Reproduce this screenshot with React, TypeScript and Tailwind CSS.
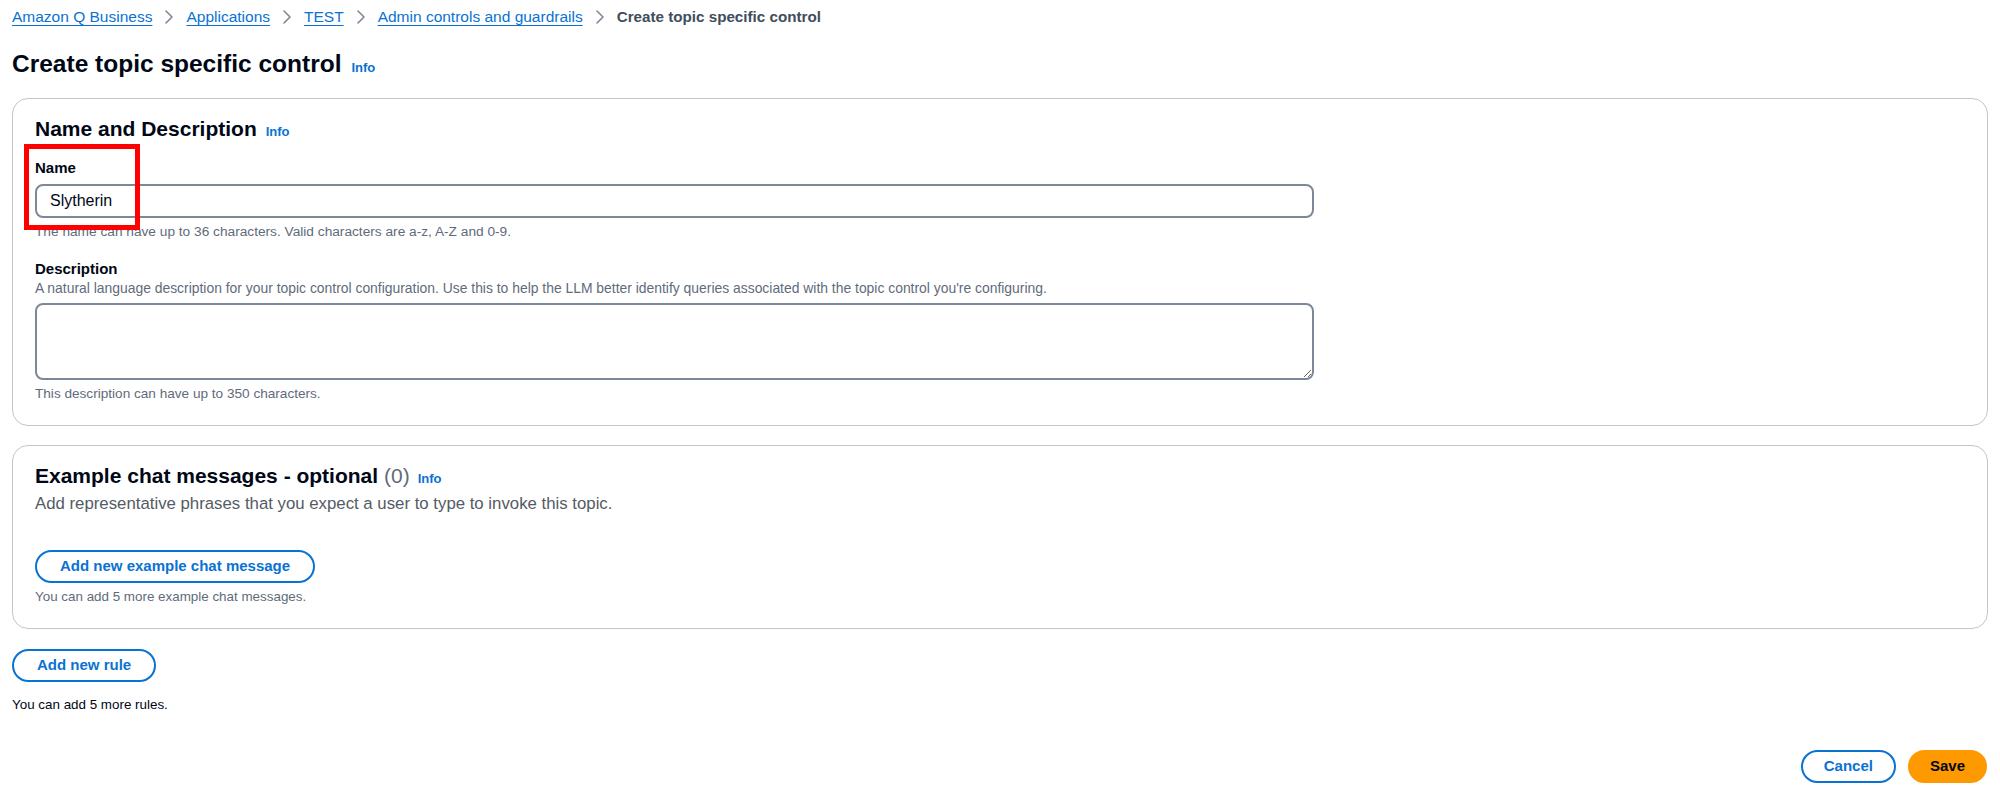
import React from "react";

type Crumb = { label: string; href?: string };

const crumbs: Crumb[] = [
  { label: "Amazon Q Business", href: "#" },
  { label: "Applications", href: "#" },
  { label: "TEST", href: "#" },
  { label: "Admin controls and guardrails", href: "#" },
  { label: "Create topic specific control" },
];

function Chevron() {
  return (
    <svg width="8" height="14" viewBox="0 0 8 14" className="mx-[13px] shrink-0" fill="none">
      <path d="M1 1l6 6-6 6" stroke="#7d8998" strokeWidth="1.6" strokeLinecap="round" strokeLinejoin="round" />
    </svg>
  );
}

function Info() {
  return <a href="#" className="text-[13px] font-bold text-[#0972d3]">Info</a>;
}

function OutlineButton({ children, className = "" }: { children: React.ReactNode; className?: string }) {
  return (
    <button
      type="button"
      className={`h-[33px] rounded-full border-2 border-[#0972d3] bg-white text-[15px] font-bold text-[#0972d3] ${className}`}
    >
      {children}
    </button>
  );
}

export default function App() {
  return (
    <div className="min-h-[799px] bg-white px-3 font-['Liberation_Sans',Arial,sans-serif] text-[#000716]">
      <nav className="flex items-center pt-[6px] text-[15.5px] leading-[22px]">
        {crumbs.map((c, i) => (
          <React.Fragment key={c.label}>
            {c.href ? (
              <a href={c.href} className="text-[#0972d3] underline decoration-1 underline-offset-[3px]">
                {c.label}
              </a>
            ) : (
              <span className="text-[15.2px] font-bold text-[#414d5c]">{c.label}</span>
            )}
            {i < crumbs.length - 1 && <Chevron />}
          </React.Fragment>
        ))}
      </nav>

      <div className="mt-[20px] flex items-baseline gap-[10px]">
        <h1 className="text-[24.5px] font-bold leading-[32px]">Create topic specific control</h1>
        <Info />
      </div>

      <section className="relative mt-[18px] rounded-[16px] border border-[#c0c6ce] px-[22px] pt-[16px] pb-[22px]">
        <div className="flex items-baseline gap-[9px]">
          <h2 className="text-[21px] font-bold leading-[28px]">Name and Description</h2>
          <Info />
        </div>

        <label className="mt-[15px] block text-[15px] font-bold leading-[20px]">Name</label>
        <input
          readOnly
          value="Slytherin"
          className="mt-[6px] block h-[34px] w-[1279px] rounded-[8px] border-2 border-[#7d8998] pl-[13px] text-[16px] text-[#000716] outline-none"
        />
        <p className="mt-[5px] text-[13.7px] leading-[18px] text-[#5f6b7a]">
          The name can have up to 36 characters. Valid characters are a-z, A-Z and 0-9.
        </p>

        <label className="mt-[18px] block text-[15px] font-bold leading-[20px]">Description</label>
        <p className="text-[13.9px] leading-[18px] text-[#5f6b7a]">
          A natural language description for your topic control configuration. Use this to help the LLM better identify queries associated with the topic control you're configuring.
        </p>
        <textarea className="mt-[6px] block h-[77px] w-[1279px] rounded-[8px] border-2 border-[#7d8998] px-[13px] py-[6px] text-[16px] outline-none" />
        <p className="mt-[5px] text-[13.6px] leading-[18px] text-[#5f6b7a]">
          This description can have up to 350 characters.
        </p>

        <div className="absolute left-[11px] top-[45px] h-[86px] w-[116px] border-[5px] border-[#ff0000]" />
      </section>

      <section className="mt-[19px] rounded-[16px] border border-[#c0c6ce] px-[22px] pt-[16px] pb-[22px]">
        <div className="flex items-baseline gap-[8px]">
          <h2 className="text-[21px] font-bold leading-[28px]">
            Example chat messages - optional <span className="font-normal text-[#5f6b7a]">(0)</span>
          </h2>
          <Info />
        </div>
        <p className="mt-[3px] text-[16.8px] leading-[22px] text-[#545b64]">
          Add representative phrases that you expect a user to type to invoke this topic.
        </p>
        <OutlineButton className="mt-[35px] px-[23px]">Add new example chat message</OutlineButton>
        <p className="mt-[5px] text-[13.4px] leading-[18px] text-[#5f6b7a]">
          You can add 5 more example chat messages.
        </p>
      </section>

      <OutlineButton className="mt-[20px] px-[23px]">Add new rule</OutlineButton>
      <p className="mt-[14px] text-[13.4px] leading-[18px] text-[#000716]">You can add 5 more rules.</p>

      <div className="mt-[36px] flex justify-end gap-[12px] pr-px">
        <OutlineButton className="px-[21px]">Cancel</OutlineButton>
        <button
          type="button"
          className="h-[33px] rounded-full border-2 border-[#ff9900] bg-[#ff9900] px-[20px] text-[15px] font-bold text-[#000716]"
        >
          Save
        </button>
      </div>
    </div>
  );
}
